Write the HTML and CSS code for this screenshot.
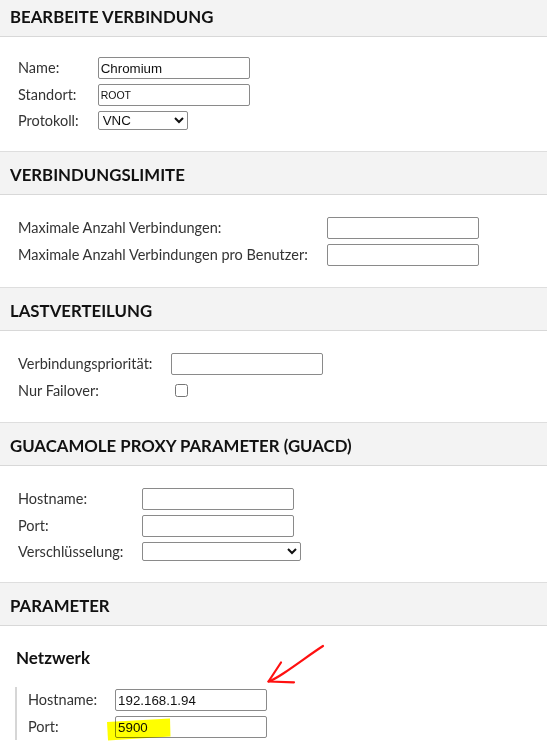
FILE: index.html
```html
<!DOCTYPE html>
<html lang="de">
<head>
<meta charset="utf-8">
<title>Bearbeite Verbindung</title>
<link rel="stylesheet" href="styles.css">
</head>
<body>
<div class="page">
  <section class="section first">
    <h2 class="header">Bearbeite Verbindung</h2>
    <div class="fields-grid">
      <label class="lbl">Name:</label>
      <input class="txt" type="text" value="Chromium">
      <label class="lbl">Standort:</label>
      <input class="txt small" type="text" value="ROOT">
      <label class="lbl">Protokoll:</label>
      <select class="sel proto"><option>VNC</option></select>
    </div>
  </section>

  <section class="section">
    <h2 class="header">Verbindungslimite</h2>
    <div class="fields-grid">
      <label class="lbl">Maximale Anzahl Verbindungen:</label>
      <input class="txt" type="text">
      <label class="lbl">Maximale Anzahl Verbindungen pro Benutzer:</label>
      <input class="txt" type="text">
    </div>
  </section>

  <section class="section">
    <h2 class="header">Lastverteilung</h2>
    <div class="fields-grid">
      <label class="lbl">Verbindungspriorität:</label>
      <input class="txt" type="text">
      <label class="lbl">Nur Failover:</label>
      <input class="chk" type="checkbox">
    </div>
  </section>

  <section class="section">
    <h2 class="header">Guacamole Proxy Parameter (GUACD)</h2>
    <div class="fields-grid">
      <label class="lbl">Hostname:</label>
      <input class="txt" type="text">
      <label class="lbl">Port:</label>
      <input class="txt" type="text">
      <label class="lbl">Verschlüsselung:</label>
      <select class="sel enc"><option></option></select>
    </div>
  </section>

  <section class="section">
    <h2 class="header">Parameter</h2>
    <div class="param-body">
      <h3 class="subhead">Netzwerk</h3>
      <div class="fields-grid bar">
        <label class="lbl">Hostname:</label>
        <input class="txt" type="text" value="192.168.1.94">
        <label class="lbl">Port:</label>
        <input class="txt" type="text" value="5900">
      </div>
    </div>
  </section>

  <svg class="annot" width="547" height="750" viewBox="0 0 547 750" aria-hidden="true">
    <path d="M107,722 L170,718.5 L170.5,736.5 L108,740.5 Z" fill="#ffff00"/>
    <path d="M323,646 C312,653 299,663 284,673 C278,677 273,680 268.5,681.5" fill="none" stroke="#ff1010" stroke-width="2.2" stroke-linecap="round"/>
    <path d="M281,662.5 L268.5,681.5 L294,682.3" fill="none" stroke="#ff1010" stroke-width="2.2" stroke-linecap="round" stroke-linejoin="round"/>
  </svg>
</div>
</body>
</html>
```

FILE: styles.css
```css
html, body {
  margin: 0;
  padding: 0;
  background: #ffffff;
}

body {
  font-family: Lato, "Open Sans", sans-serif;
  color: #333;
  overflow: hidden;
}

.page {
  position: relative;
  width: 547px;
  height: 750px;
  overflow: hidden;
}

.section.first {
  margin-top: -7px;
}

.header {
  margin: 0;
  height: 44px;
  box-sizing: border-box;
  padding: 2px 10px 0;
  display: flex;
  align-items: center;
  background: #f3f3f3;
  border-top: 1px solid #dedede;
  border-bottom: 1px solid #d8d8d8;
  font-size: 16.8px;
  font-weight: bold;
  text-transform: uppercase;
  color: #111;
}

.fields-grid {
  display: grid;
  grid-template-columns: max-content max-content;
  column-gap: 19px;
  row-gap: 5px;
  align-items: center;
  padding: 22px 18px 21px;
}

.section.first .fields-grid {
  padding-top: 20px;
  padding-bottom: 21px;
}

.lbl {
  font-size: 14.5px;
  color: #333;
  line-height: 18px;
}

.txt {
  width: 152px;
  height: 22px;
  box-sizing: border-box;
  margin: 0;
  padding: 1px 2px;
  border: 1px solid #8a8a8a;
  border-radius: 2px;
  font-family: "Liberation Sans", Arial, sans-serif;
  font-size: 13.33px;
  color: #111;
  background: #fff;
}

.txt.small {
  font-size: 10.5px;
}

.sel {
  margin: 0;
  height: 19px;
  box-sizing: border-box;
  border: 1px solid #8a8a8a;
  border-radius: 2px;
  font-family: "Liberation Sans", Arial, sans-serif;
  font-size: 13.33px;
  color: #111;
  background: #fff;
  padding: 0;
}

.sel.proto {
  width: 90px;
}

.sel.enc {
  width: 159px;
}

.chk {
  width: 13px;
  height: 13px;
  margin: 4px 3px 4px 4px;
}

.param-body {
  padding-top: 22px;
}

.subhead {
  margin: 0 0 0 16px;
  font-size: 17px;
  font-weight: bold;
  color: #111;
  line-height: 20px;
}

.fields-grid.bar {
  margin: 19px 0 0 15px;
  padding: 2px 0 2px 11px;
  border-left: 2px solid #d6d6d6;
  column-gap: 18px;
}

.annot {
  position: absolute;
  left: 0;
  top: 0;
  pointer-events: none;
  mix-blend-mode: multiply;
}
```
